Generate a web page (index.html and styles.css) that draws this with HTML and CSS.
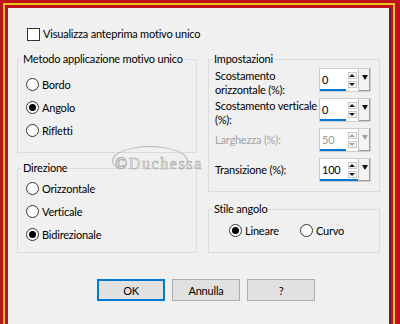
FILE: index.html
```html
<!DOCTYPE html>
<html lang="it">
<head>
  <meta charset="UTF-8">
  <title>Motivo unico</title>
  <link rel="stylesheet" href="styles.css">
</head>
<body>
  <div class="frame">
    <div class="frame-gold">
      <div class="frame-in">
        <div class="dialog">
          <div class="check-row"><span class="checkbox"></span>Visualizza anteprima motivo unico</div>

          <div class="cols">
            <div class="col col-left">
              <fieldset class="group g-metodo">
                <legend>Metodo applicazione motivo unico</legend>
                <div class="opt"><span class="radio"></span>Bordo</div>
                <div class="opt"><span class="radio on"></span>Angolo</div>
                <div class="opt"><span class="radio"></span>Rifletti</div>
              </fieldset>
              <fieldset class="group g-dir">
                <legend>Direzione</legend>
                <div class="opt"><span class="radio"></span>Orizzontale</div>
                <div class="opt"><span class="radio"></span>Verticale</div>
                <div class="opt"><span class="radio on"></span>Bidirezionale</div>
              </fieldset>
            </div>

            <div class="col col-right">
              <fieldset class="group g-imp">
                <legend>Impostazioni</legend>
                <div class="settings">
                  <div class="lbl">Scostamento<br>orizzontale (%):</div>
                  <div class="spin"><span class="val">0</span><span class="ud"><i class="up"></i><i class="down"></i></span><span class="dd"></span></div>

                  <div class="lbl">Scostamento verticale<br>(%):</div>
                  <div class="spin"><span class="val">0</span><span class="ud"><i class="up"></i><i class="down"></i></span><span class="dd"></span></div>

                  <div class="lbl one off">Larghezza (%):</div>
                  <div class="spin off"><span class="val">50</span><span class="ud"><i class="up"></i><i class="down"></i></span><span class="dd"></span></div>

                  <div class="lbl one">Transizione (%):</div>
                  <div class="spin focus"><span class="val">100</span><span class="ud"><i class="up"></i><i class="down"></i></span><span class="dd"></span></div>
                </div>
              </fieldset>
              <fieldset class="group g-stile">
                <legend>Stile angolo</legend>
                <div class="opts-row">
                  <div class="opt"><span class="radio on"></span>Lineare</div>
                  <div class="opt"><span class="radio"></span>Curvo</div>
                </div>
              </fieldset>
            </div>
          </div>

          <div class="buttons">
            <button class="btn def">OK</button>
            <button class="btn">Annulla</button>
            <button class="btn">?</button>
          </div>

          <div class="wm-arc"></div>
          <span class="wm-text">©Duchessa</span>
        </div>
      </div>
    </div>
  </div>
</body>
</html>
```

FILE: styles.css
```css
body {
  margin: 0;
  font-family: Lato, "Noto Sans", sans-serif;
  font-size: 11px;
  letter-spacing: -0.2px;
  line-height: 14px;
  color: #000;
}
.frame {
  width: 400px;
  height: 324px;
  box-sizing: border-box;
  border: solid #c1121b;
  border-width: 3px 5px 6px 3px;
}
.frame-gold {
  border: 2px solid #e9c21e;
}
.frame-in {
  border: solid #c1121b;
  border-width: 3px 2px 2px 3px;
}
.dialog {
  position: relative;
  width: 381px;
  height: 303px;
  background: #f0f0f0;
  border-right: 2px solid #4a2a3a;
  border-bottom: 3px solid #4a2a3a;
  padding-top: 19px;
  box-sizing: content-box;
}
.check-row {
  display: flex;
  align-items: center;
  height: 14px;
  margin-left: 19px;
}
.checkbox {
  width: 13px;
  height: 13px;
  box-sizing: border-box;
  border: 1px solid #333;
  background: #fff;
  margin-right: 3px;
}
.cols {
  display: flex;
  gap: 11px;
  margin: 11px 0 0 9px;
}
.col {
  display: flex;
  flex-direction: column;
}
.col-left {
  width: 180px;
}
.col-right {
  width: 172px;
}
.group {
  margin: 0;
  min-width: 0;
  border: 1px solid #dcdcdc;
  padding: 0 8px;
}
.group legend {
  padding: 0 2px;
  margin-left: -5px;
  line-height: 14px;
  white-space: nowrap;
}
.g-metodo {
  padding-top: 7px;
  padding-bottom: 10px;
}
.g-dir {
  margin-top: 8px;
  padding-top: 2px;
  padding-bottom: 6px;
}
.g-imp {
  padding: 2px 8px 9px 6px;
}
.g-imp legend {
  margin-left: -3px;
}
.g-stile {
  margin-top: 10px;
  padding: 3px 8px 10px 20px;
}
.g-stile legend {
  margin-left: -17px;
}
.opt {
  display: flex;
  align-items: center;
  height: 23px;
}
.opts-row {
  display: flex;
}
.opts-row .opt {
  width: 77px;
}
.radio {
  width: 13px;
  height: 13px;
  box-sizing: border-box;
  border: 1px solid #333;
  border-radius: 50%;
  background: #fff;
  margin-right: 3px;
  display: flex;
  align-items: center;
  justify-content: center;
}
.radio.on::after {
  content: "";
  width: 7px;
  height: 7px;
  border-radius: 50%;
  background: #000;
}
.settings {
  display: grid;
  grid-template-columns: 104px 52px;
  grid-template-rows: repeat(4, 24px);
  row-gap: 6px;
}
.lbl {
  align-self: start;
  padding-top: 1px;
  white-space: nowrap;
}
.lbl.one {
  align-self: center;
  padding-top: 0;
}
.lbl.off {
  color: #a3a3a3;
}
.spin {
  display: flex;
  height: 24px;
  box-sizing: border-box;
  border: 1px solid #cdcdcd;
  background: #fff;
}
.spin .val {
  width: 26px;
  padding-left: 2px;
  line-height: 22px;
  box-sizing: border-box;
  box-shadow: inset 0 -2px 0 #0078d7;
}
.spin.focus {
  box-shadow: inset 0 -2px 0 #0078d7;
}
.spin.focus .val {
  box-shadow: none;
}
.spin.off .val {
  color: #9a9a9a;
}
.spin .ud {
  width: 12px;
  display: flex;
  flex-direction: column;
  align-items: center;
  padding-top: 3px;
  gap: 2px;
}
.spin .ud i {
  width: 9px;
  height: 7px;
  box-sizing: border-box;
  border: 1px solid #c9c9c9;
  background: #f7f7f7;
  display: flex;
  align-items: center;
  justify-content: center;
}
.spin .ud i::after {
  content: "";
  border-left: 3px solid transparent;
  border-right: 3px solid transparent;
}
.spin .ud .up::after {
  border-bottom: 3px solid #111;
}
.spin .ud .down::after {
  border-top: 3px solid #111;
}
.spin .dd {
  width: 12px;
  box-sizing: border-box;
  border-left: 1px solid #c4c4c4;
  background: #f4f4f4;
  box-shadow: inset -1px -1px 0 #9c9c9c;
  display: flex;
  justify-content: center;
  padding-top: 6px;
}
.spin .dd::after {
  content: "";
  width: 0;
  height: 0;
  border-left: 3px solid transparent;
  border-right: 3px solid transparent;
  border-top: 5px solid #111;
}
.spin.off .ud .up::after {
  border-bottom-color: #a0a0a0;
}
.spin.off .ud .down::after {
  border-top-color: #a0a0a0;
}
.spin.off .dd::after {
  border-top-color: #a0a0a0;
}
.buttons {
  display: flex;
  gap: 7px;
  margin: 26px 0 0 89px;
}
.btn {
  width: 68px;
  height: 22px;
  padding: 0;
  background: #e1e1e1;
  border: 1px solid #adadad;
  font-family: Lato, "Noto Sans", sans-serif;
  font-size: 11px;
  letter-spacing: -0.2px;
  color: #000;
}
.btn.def {
  border: 2px solid #0078d7;
}
.wm-arc {
  position: absolute;
  left: 104px;
  top: 138px;
  width: 76px;
  height: 30px;
  box-sizing: border-box;
  border: 1.5px solid #b3b3b3;
  border-bottom-color: transparent;
  border-radius: 50%;
}
.wm-text {
  position: absolute;
  left: 107px;
  top: 149px;
  font-family: "Liberation Serif", serif;
  font-size: 16px;
  line-height: 14px;
  letter-spacing: 1.6px;
  color: #eeeeee;
  -webkit-text-stroke: 0.6px #a9a9a9;
}
```
